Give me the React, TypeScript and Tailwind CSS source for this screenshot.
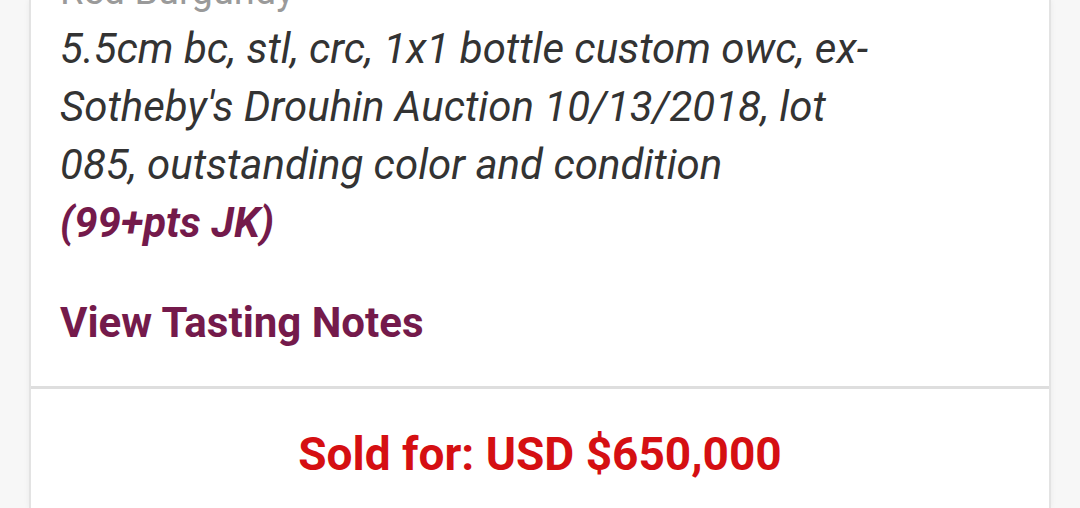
import React from "react";

export default function App() {
  return (
    <div className="h-[508px] w-[1080px] overflow-hidden bg-[#f7f7f7] px-[29px]" style={{ fontFamily: "Roboto, 'Liberation Sans', sans-serif" }}>
      <div className="flex h-full flex-col overflow-hidden bg-white border-x-2 border-[#e3e3e3] shadow-[0_0_6px_rgba(0,0,0,0.06)]">
        <div className="pl-[29px] pr-[30px] pb-[34px]">
          <div className="-mt-[38px] text-[38px] leading-[58px] text-[#9a9a9a]">Red Burgundy</div>
          <p className="text-[42px] leading-[58px] italic text-[#333333]">
            5.5cm bc, stl, crc, 1x1 bottle custom owc, ex-
            <br />
            Sotheby's Drouhin Auction 10/13/2018, lot
            <br />
            085, outstanding color and condition
          </p>
          <p className="text-[42px] leading-[58px] italic font-bold text-[#741a4b]">(99+pts JK)</p>
          <div className="mt-[42px] text-[42px] leading-[58px] font-bold text-[#741a4b]">View Tasting Notes</div>
        </div>
        <div className="h-[3px] shrink-0 bg-[#dedede]"></div>
        <div className="pt-[35px] text-center text-[46px] leading-[60px] font-bold text-[#d50f12]">Sold for: USD $650,000</div>
      </div>
    </div>
  );
}
